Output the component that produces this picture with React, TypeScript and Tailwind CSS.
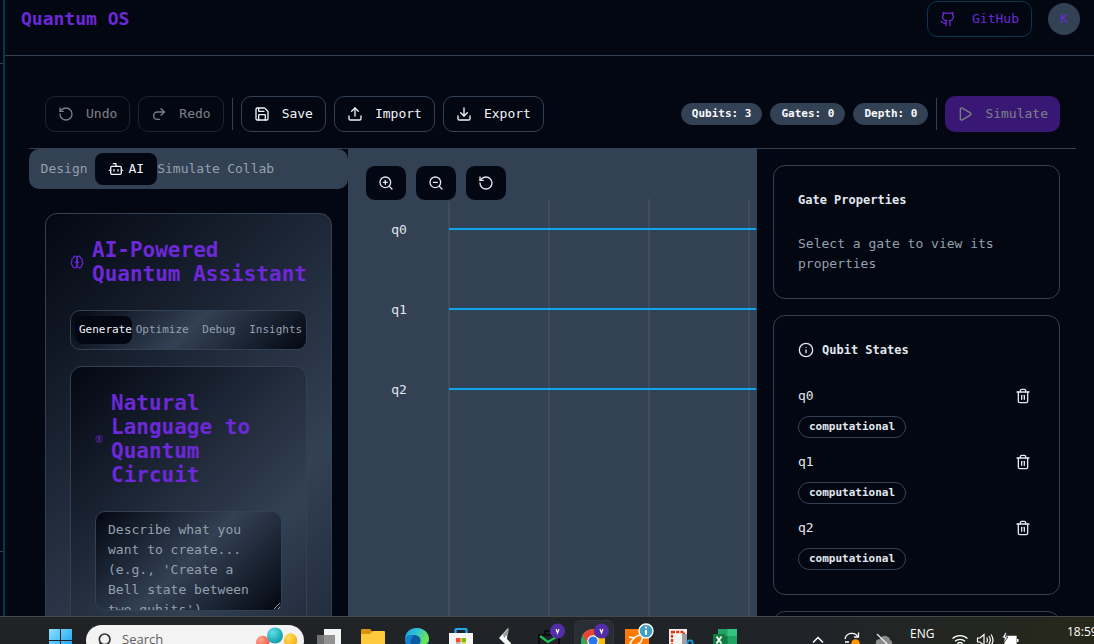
import type { ReactNode } from "react";
import {
  Bot,
  Download,
  Github,
  Info,
  Play,
  Redo2,
  RotateCcw,
  Save,
  Search,
  Trash2,
  Upload,
  ZoomIn,
  ZoomOut,
} from "lucide-react";

const qubits = ["q0", "q1", "q2"];
const gridColumns = [0, 1, 2, 3, 4, 5, 6, 7, 8, 9, 10, 11, 12];

function Brain({ className }: { className: string }) {
  return (
    <svg
      viewBox="0 0 24 24"
      className={className}
      fill="none"
      stroke="currentColor"
      strokeWidth="2"
      strokeLinecap="round"
      strokeLinejoin="round"
    >
      <path d="M12 5a3 3 0 1 0-5.997.125 4 4 0 0 0-2.526 5.770 4 4 0 0 0 .556 6.588A4 4 0 1 0 12 18Z" />
      <path d="M12 5a3 3 0 1 1 5.997.125 4 4 0 0 1 2.526 5.770 4 4 0 0 1-.556 6.588A4 4 0 1 1 12 18Z" />
      <path d="M15 13a4.500 4.500 0 0 1-3-4 4.500 4.500 0 0 1-3 4" />
    </svg>
  );
}

function Sidebar() {
  return (
    <aside className="flex w-[5px] shrink-0 flex-col justify-between border-r-2 border-[#063652]">
      <div className="h-16 border-b border-[#334155]" />
      <div className="h-[65px] border-t border-[#334155]" />
    </aside>
  );
}

function Header() {
  return (
    <header className="flex items-center justify-between border-b border-[#334155] pt-px pr-[14px] pb-[18px] pl-4">
      <h1 className="text-lg font-bold text-[#6d28d9]">Quantum OS</h1>
      <div className="flex items-center gap-4">
        <a
          href="#github"
          className="flex h-9 items-center gap-4 rounded-[10px] border border-[#063652] px-3 text-[13px] text-[#6d28d9]"
        >
          <Github className="size-4" />
          GitHub
        </a>
        <button className="size-8 rounded-full bg-[#334155] text-[13px] text-[#6d28d9]">K</button>
      </div>
    </header>
  );
}

function ToolButton({ icon, label, disabled }: { icon: ReactNode; label: string; disabled?: boolean }) {
  return (
    <button
      disabled={disabled}
      className="flex h-9 items-center gap-3 rounded-[10px] border border-[#334155] px-3 text-[13px] text-slate-100 disabled:opacity-50"
    >
      {icon}
      {label}
    </button>
  );
}

function Separator() {
  return <div className="h-8 w-px bg-[#334155]" />;
}

function Toolbar() {
  return (
    <div className="flex items-center justify-between border-b border-[#334155] p-4">
      <div className="flex items-center gap-2">
        <ToolButton icon={<RotateCcw className="size-4" />} label="Undo" disabled />
        <ToolButton icon={<Redo2 className="size-4" />} label="Redo" disabled />
        <Separator />
        <ToolButton icon={<Save className="size-4" />} label="Save" />
        <ToolButton icon={<Upload className="size-4" />} label="Import" />
        <ToolButton icon={<Download className="size-4" />} label="Export" />
      </div>
      <div className="flex items-center gap-2">
        {["Qubits: 3", "Gates: 0", "Depth: 0"].map((stat) => (
          <span
            key={stat}
            className="rounded-full border border-[#334155] bg-[#334155] px-[10px] text-[11px] leading-5 font-bold whitespace-nowrap text-slate-50"
          >
            {stat}
          </span>
        ))}
        <Separator />
        <button
          disabled
          className="flex h-9 items-center gap-3 rounded-[10px] bg-[#6d28d9] px-3 text-[13px] text-slate-100 disabled:opacity-50"
        >
          <Play className="size-4" />
          Simulate
        </button>
      </div>
    </div>
  );
}

function AssistantPanel() {
  return (
    <section className="flex w-80 shrink-0 flex-col overflow-hidden border-r border-[#334155]">
      <div className="grid h-10 shrink-0 grid-cols-5 rounded-[10px] bg-[#334155] p-1 text-[13px] text-[#94a0ae]">
        <button className="flex items-center justify-center">Design</button>
        <button className="flex items-center justify-center gap-1 rounded-lg bg-[#030711] text-slate-100">
          <Bot className="size-4" />
          AI
        </button>
        <button className="flex items-center justify-center">Simulate</button>
        <button className="flex items-center justify-center">Collab</button>
      </div>

      <div className="mx-4 mt-6 min-h-[740px] rounded-xl border border-[#334155] bg-[linear-gradient(135deg,#030711,#334155,#030711)] p-6">
        <div className="flex items-center gap-2 text-[#6d28d9]">
          <Brain className="size-[14px] shrink-0" />
          <h2 className="text-[21px] leading-6 font-bold">
            AI-Powered
            <br />
            Quantum Assistant
          </h2>
        </div>

        <div className="mt-6 grid h-10 grid-cols-4 rounded-[10px] border border-[#334155] bg-[linear-gradient(135deg,#030711,#334155,#030711)] px-1 py-[5px] text-[11px] text-[#94a0ae]">
          <button className="flex items-center justify-center rounded-lg bg-[#030711] pl-1 text-slate-100">
            Generate
          </button>
          <button className="flex items-center justify-center pl-1">Optimize</button>
          <button className="flex items-center justify-center pl-1">Debug</button>
          <button className="flex items-center justify-center pl-1">Insights</button>
        </div>

        <div className="mt-4 min-h-[492px] rounded-xl border border-[#334155] bg-[linear-gradient(135deg,#030711,#334155,#030711)] p-6">
          <div className="flex items-center gap-2 text-[#6d28d9]">
            <Brain className="size-2 shrink-0" />
            <h3 className="text-[21px] leading-6 font-bold">Natural Language to Quantum Circuit</h3>
          </div>
          <textarea
            aria-label="Circuit description"
            placeholder="Describe what you want to create... (e.g., 'Create a Bell state between two qubits')"
            className="mt-6 block h-[100px] w-full resize-y overflow-hidden rounded-[10px] border border-[#334155] bg-[linear-gradient(135deg,#030711,#334155,#030711)] px-3 py-2 text-[13px] leading-5 placeholder:text-[#94a0ae]"
          />
        </div>
      </div>
    </section>
  );
}

function CircuitCanvas() {
  return (
    <section className="relative min-w-0 flex-1 bg-[#334155]">
      <svg className="absolute inset-0 h-full w-full">
        {gridColumns.map((col) => (
          <line
            key={col}
            x1={100 + col * 100}
            x2={100 + col * 100}
            y1="50"
            y2="100%"
            stroke="#3f4b5e"
            strokeWidth="2"
          />
        ))}
        {qubits.map((qubit, i) => (
          <g key={qubit}>
            <line x1="100" x2="100%" y1={80 + i * 80} y2={80 + i * 80} stroke="#0ea5e9" strokeWidth="2" />
            <text x="50" y={85 + i * 80} textAnchor="middle" fontSize="13" fill="#e1e7ef">
              {qubit}
            </text>
          </g>
        ))}
      </svg>
      <div className="absolute top-4 left-4 flex gap-2">
        <button aria-label="Zoom in" className="h-9 rounded-[10px] border border-[#334155] bg-[#030711] px-3">
          <ZoomIn className="size-4" />
        </button>
        <button aria-label="Zoom out" className="h-9 rounded-[10px] border border-[#334155] bg-[#030711] px-3">
          <ZoomOut className="size-4" />
        </button>
        <button aria-label="Reset view" className="h-9 rounded-[10px] border border-[#334155] bg-[#030711] px-3">
          <RotateCcw className="size-4" />
        </button>
      </div>
    </section>
  );
}

function PropertiesPanel() {
  return (
    <section className="flex w-80 shrink-0 flex-col gap-4 overflow-hidden border-l border-[#334155] p-4">
      <div className="shrink-0 rounded-xl border border-[#334155] p-6">
        <h3 className="text-xs leading-5 font-bold">Gate Properties</h3>
        <p className="mt-6 text-[13px] leading-5 text-[#94a0ae]">Select a gate to view its properties</p>
      </div>

      <div className="shrink-0 rounded-xl border border-[#334155] p-6">
        <h3 className="flex items-center gap-2 text-xs leading-5 font-bold">
          <Info className="size-4" />
          Qubit States
        </h3>
        <ul className="mt-6 flex flex-col gap-3">
          {qubits.map((qubit) => (
            <li key={qubit}>
              <div className="flex h-6 items-center justify-between text-[13px]">
                {qubit}
                <button aria-label={`Remove ${qubit}`} className="flex size-6 items-center justify-center">
                  <Trash2 className="size-4" />
                </button>
              </div>
              <span className="mt-2 block w-fit rounded-full border border-[#334155] px-[10px] text-[11px] leading-5 font-bold">
                computational
              </span>
            </li>
          ))}
        </ul>
      </div>

      <div className="h-32 shrink-0 rounded-xl border border-[#334155]" />
    </section>
  );
}

function TaskbarItem({ label, active, children }: { label: string; active?: boolean; children: ReactNode }) {
  return (
    <button
      aria-label={label}
      className={
        active
          ? "flex size-10 items-center justify-center rounded-md border border-[#30353b] bg-[#292e34]"
          : "flex size-10 items-center justify-center"
      }
    >
      <svg viewBox="0 0 40 40" className="size-10 shrink-0">
        {children}
      </svg>
    </button>
  );
}

/* Purple profile dot shown over pinned apps */
function ProfileDot() {
  return (
    <>
      <circle cx="27.500" cy="11" r="7.600" fill="#512da8" />
      <path d="M26 9l1.500 4 1.500-4" fill="none" stroke="#fff" strokeWidth="1.200" />
    </>
  );
}

function Taskbar() {
  return (
    <footer className="h-7 shrink-0 overflow-hidden border-t border-[#46484a] bg-linear-to-r from-[#202225] from-0% via-[#202428] via-75% to-[#26281a] font-['Open_Sans',sans-serif] text-white">
      <div className="flex h-[46px] items-center pl-10">
        <TaskbarItem label="Start">
          <defs>
            <linearGradient id="win" x1="0" y1="0" x2="1" y2="1">
              <stop offset="0" stopColor="#8be0ff" />
              <stop offset="1" stopColor="#0a9bf0" />
            </linearGradient>
          </defs>
          <path d="M9 9h11v11H9zM21 9h11v11H21zM9 21h11v11H9zM21 21h11v11H21z" fill="url(#win)" />
        </TaskbarItem>

        <label className="mx-[6px] flex h-[31px] w-[218px] shrink-0 items-center rounded-full bg-[#f3f3f3] pl-[10px]">
          <Search className="size-4 shrink-0 -scale-x-100 text-[#333]" strokeWidth={2.5} />
          <input
            type="search"
            placeholder="Search"
            className="ml-[10px] w-[120px] text-[13px] text-[#333] placeholder:text-[#606060]"
          />
          <svg viewBox="0 0 48 30" className="ml-auto h-[30px] w-12 shrink-0" aria-hidden="true">
            <defs>
              <radialGradient id="red" cx=".35" cy=".3" r=".8">
                <stop offset="0" stopColor="#ffa489" />
                <stop offset="1" stopColor="#f0503c" />
              </radialGradient>
              <radialGradient id="teal" cx=".35" cy=".3" r=".8">
                <stop offset="0" stopColor="#5ee0e8" />
                <stop offset="1" stopColor="#0b94a5" />
              </radialGradient>
              <radialGradient id="yellow" cx=".35" cy=".3" r=".8">
                <stop offset="0" stopColor="#ffdf5c" />
                <stop offset="1" stopColor="#f4a70f" />
              </radialGradient>
            </defs>
            <circle cx="6.800" cy="17.500" r="6.700" fill="url(#red)" />
            <ellipse cx="34.500" cy="15.500" rx="6.700" ry="7.200" fill="url(#yellow)" />
            <circle cx="19" cy="10.500" r="8" fill="url(#teal)" />
          </svg>
        </label>

        <div className="flex items-center gap-1">
          <TaskbarItem label="Task view">
            <path d="M14 9h17v18H14z" fill="#f4f4f4" />
            <path d="M7 15h18v17H7z" fill="#808080" fillOpacity=".85" />
          </TaskbarItem>
          <TaskbarItem label="File Explorer">
            <path d="M7 10q0-1 1-1h8l3 3h10v8H7z" fill="#d8920b" />
            <path d="M7 14h9l3-3h11q1 0 1 1v19H7z" fill="#ffcb3d" />
            <path d="M11 24h16v6H11z" fill="#3b87c8" />
          </TaskbarItem>
          <TaskbarItem label="Edge">
            <defs>
              <linearGradient id="edge" x1="0" y1="0" x2="1" y2=".4">
                <stop offset="0" stopColor="#1b9de2" />
                <stop offset=".5" stopColor="#31c2d4" />
                <stop offset="1" stopColor="#6be554" />
              </linearGradient>
            </defs>
            <circle cx="19" cy="20" r="12" fill="#0c59a4" />
            <path d="M7 20C7 12 12 8 19 8s12 5 12 11c0 4-3 6-7 6-2 0-3-1-2-2 2-4-1-8-6-8-4 0-8 2-9 5z" fill="url(#edge)" />
            <path d="M7 19c1-4 6-5 9-3-4 2-5 8-1 13-5-1-8-5-8-10z" fill="#1681d0" />
          </TaskbarItem>
          <TaskbarItem label="Store">
            <path d="M13.500 14v-4q0-1 1-1h9q1 0 1 1v4" fill="none" stroke="#20a9ee" strokeWidth="2.200" />
            <path d="M7 13h24v16q0 2-2 2H9q-2 0-2-2z" fill="#f5f5f5" />
            <path d="M14 18h4.500v4.500H14z" fill="#f25022" />
            <path d="M19.500 18H24v4.500h-4.500z" fill="#7fba00" />
            <path d="M14 23.500h4.500V28H14z" fill="#00a4ef" />
            <path d="M19.500 23.500H24V28h-4.500z" fill="#ffb900" />
          </TaskbarItem>
          <TaskbarItem label="Editor">
            <path d="M22 8L13 18l6 6 5 8 1-9-4-4z" fill="#f7f7f7" />
            <path d="M23 8l-6 6 1 4 4-4z" fill="#9b9b9b" />
          </TaskbarItem>
          <TaskbarItem label="Mail">
            <path d="M9 15h20v15H9zM15 15v-4h8v4" fill="none" stroke="#050708" strokeWidth="1.600" />
            <path d="M10 16l8 6 10-6" fill="none" stroke="#1fc15b" strokeWidth="2.200" />
            <ProfileDot />
          </TaskbarItem>
          <TaskbarItem label="Chrome" active>
            <circle cx="19" cy="21" r="12" fill="#34a853" />
            <path d="M8.600 15a12 12 0 0 1 20.800 0H19l-5 9z" fill="#ea4335" />
            <path d="M29.400 15a12 12 0 0 1-10.400 18l5.500-9-1-9z" fill="#fbbc05" />
            <circle cx="19" cy="21" r="5.800" fill="#fff" />
            <circle cx="19" cy="21" r="4.600" fill="#2a75ea" />
            <ProfileDot />
          </TaskbarItem>
          <TaskbarItem label="Postman">
            <path d="M7 9h24v23H7z" fill="#ff7a05" />
            <path d="M12 23l5-6 9-4-3 9-7 5zM12 23l4 4M11 17l5 1M21 24v5" fill="none" stroke="#fff" strokeWidth="1.500" />
            <circle cx="28" cy="11" r="7" fill="#3f9fc4" stroke="#fff" strokeWidth="1.400" />
            <path d="M28 10v5M28 6.500v2" stroke="#fff" strokeWidth="2" />
          </TaskbarItem>
          <TaskbarItem label="Snipping Tool">
            <path d="M7 9h18v23H7z" fill="#f5f2f0" />
            <path d="M10 12h12v14H10z" fill="none" stroke="#d8391b" strokeWidth="2.400" strokeDasharray="3 1.200" />
            <path d="M20 14h5v14h-9v-4h4z" fill="#9ca1a7" />
            <circle cx="28" cy="23" r="2.600" fill="none" stroke="#1d9bdc" strokeWidth="1.800" />
          </TaskbarItem>
          <TaskbarItem label="Excel">
            <path d="M12 9h19v23H12z" fill="#21a366" />
            <path d="M21.500 9H31v7h-9.500z" fill="#33c481" />
            <path d="M12 16h9.500v8H12z" fill="#107c41" />
            <path d="M7 14h12v12H7z" fill="#107c41" />
            <path d="M10.500 16.500l5 7M15.500 16.500l-5 7" stroke="#fff" strokeWidth="1.800" />
          </TaskbarItem>
        </div>

        <div className="ml-auto flex shrink-0 items-center">
          <svg viewBox="0 0 16 16" className="mr-4 size-4" fill="none" stroke="#fff" strokeWidth="1.500">
            <path d="M3 10.500l5-5 5 5" />
          </svg>
          <svg viewBox="0 0 20 20" className="mr-3 size-5" fill="none" stroke="#fff" strokeWidth="1.300">
            <path d="M3 9a7 7 0 0 1 13-2M16.500 2.500V7H12M3 12h4" />
            <circle cx="13.500" cy="13.500" r="4.200" fill="#ff9800" stroke="none" />
          </svg>
          <svg viewBox="0 0 20 20" className="mr-4 size-5">
            <path d="M4 16q-3-1-2-5 1-2 4-2 2-4 6-3t4 4q3 1 2 4l-2 2z" fill="#8b8b8b" />
            <path d="M3 4l13 13" stroke="#eee" strokeWidth="1.300" />
          </svg>
          <span className="mr-[17px] h-7 w-6 text-xs leading-4">ENG</span>
          <svg viewBox="0 0 18 18" className="mr-[7px] size-[18px]" fill="none" stroke="#fff" strokeWidth="1.300">
            <path d="M1.500 7.500a11 11 0 0 1 15 0M4 10.200a7.500 7.500 0 0 1 10 0M6.300 12.700a4 4 0 0 1 5.400 0" />
            <circle cx="9" cy="15" r="1.200" fill="#fff" stroke="none" />
          </svg>
          <svg viewBox="0 0 18 18" className="mr-[7px] size-[18px]" fill="none" stroke="#fff" strokeWidth="1.200">
            <path d="M1.500 7v4h2.500l4 3.500v-11L4 7zM10.500 6.500q2 2.500 0 5M12.800 5q3 4 0 8M15 3.500q4 5.500 0 11" />
          </svg>
          <svg viewBox="0 0 18 18" className="mr-12 size-[18px]">
            <path d="M4 5.500h11v8H4z" fill="#fff" stroke="#fff" strokeWidth="1.300" />
            <path d="M16 8h1.500v3H16z" fill="#fff" />
            <path d="M4.500 1L1 7h2.500l-1 5L7 6H4.500l1-4z" fill="#fff" stroke="#202428" strokeWidth=".8" />
          </svg>
          <time className="h-8 w-[27px] text-xs leading-4 whitespace-nowrap">18:59</time>
        </div>
      </div>
    </footer>
  );
}

export default function App() {
  return (
    <div className="flex h-screen flex-col overflow-hidden bg-[#030711] font-['DejaVu_Sans_Mono',monospace] text-[#e1e7ef]">
      <div className="flex min-h-0 flex-1">
        <Sidebar />
        <div className="flex min-w-0 flex-1 flex-col">
          <Header />
          <main className="flex min-h-0 flex-1 flex-col pt-6 pr-[18px] pl-6">
            <Toolbar />
            <div className="flex min-h-0 flex-1">
              <AssistantPanel />
              <CircuitCanvas />
              <PropertiesPanel />
            </div>
          </main>
        </div>
      </div>
      <Taskbar />
    </div>
  );
}
